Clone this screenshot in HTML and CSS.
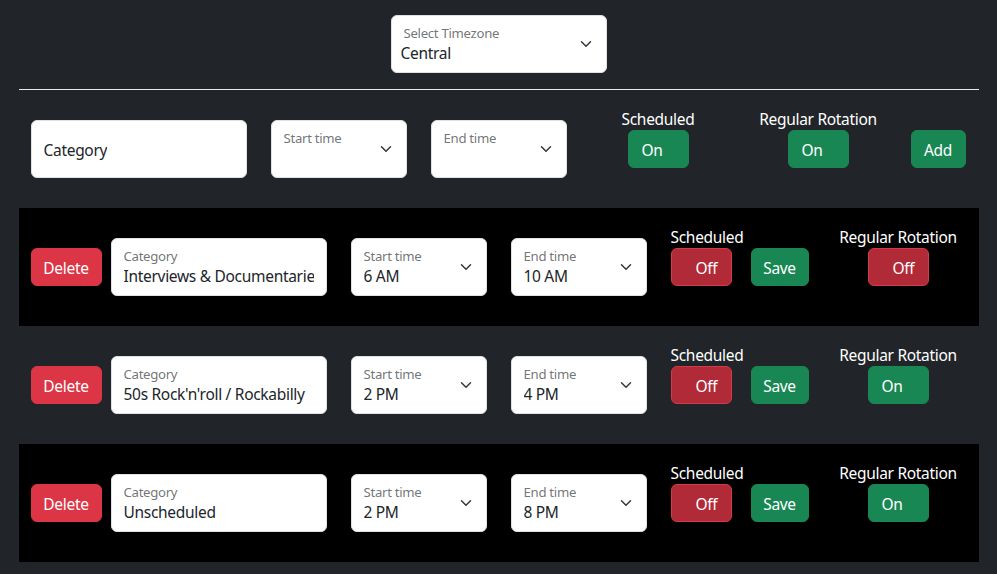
FILE: index.html
```html
<!DOCTYPE html>
<html lang="en">
<head>
<meta charset="utf-8">
<title>Schedule</title>
<link rel="stylesheet" href="styles.css">
</head>
<body>
<div class="page">
  <div class="tz-wrap">
    <div class="field select tz">
      <div class="field-text">
        <div class="field-label">Select Timezone</div>
        <div class="field-value tz-value">Central</div>
      </div>
      <svg class="chev" viewBox="0 0 16 16" width="12" height="12"><path d="M2 5l6 6 6-6" fill="none" stroke="#343a40" stroke-width="2" stroke-linecap="round" stroke-linejoin="round"/></svg>
    </div>
  </div>
  <hr class="divider">

  <div class="new-row">
    <div class="field cat plain"><div class="field-value">Category</div></div>
    <div class="field select time gap24">
      <div class="field-text">
        <div class="field-label">Start time</div>
        <div class="field-value"></div>
      </div>
      <svg class="chev" viewBox="0 0 16 16" width="12" height="12"><path d="M2 5l6 6 6-6" fill="none" stroke="#343a40" stroke-width="2" stroke-linecap="round" stroke-linejoin="round"/></svg>
    </div>
    <div class="field select time gap24">
      <div class="field-text">
        <div class="field-label">End time</div>
        <div class="field-value"></div>
      </div>
      <svg class="chev" viewBox="0 0 16 16" width="12" height="12"><path d="M2 5l6 6 6-6" fill="none" stroke="#343a40" stroke-width="2" stroke-linecap="round" stroke-linejoin="round"/></svg>
    </div>
    <div class="tcol tcol-new-sched">
      <div class="tcol-label">Scheduled</div>
      <button class="btn toggle on">On</button>
    </div>
    <div class="tcol tcol-new-rot">
      <div class="tcol-label">Regular Rotation</div>
      <button class="btn toggle on">On</button>
    </div>
    <button class="btn btn-success add">Add</button>
  </div>

  <div class="entry dark">
    <button class="btn btn-danger del">Delete</button>
    <div class="field cat gap9">
      <div class="field-text">
        <div class="field-label">Category</div>
        <div class="field-value">Interviews &amp; Documentaries</div>
      </div>
    </div>
    <div class="field select time gap24">
      <div class="field-text">
        <div class="field-label">Start time</div>
        <div class="field-value">6 AM</div>
      </div>
      <svg class="chev" viewBox="0 0 16 16" width="12" height="12"><path d="M2 5l6 6 6-6" fill="none" stroke="#343a40" stroke-width="2" stroke-linecap="round" stroke-linejoin="round"/></svg>
    </div>
    <div class="field select time gap24">
      <div class="field-text">
        <div class="field-label">End time</div>
        <div class="field-value">10 AM</div>
      </div>
      <svg class="chev" viewBox="0 0 16 16" width="12" height="12"><path d="M2 5l6 6 6-6" fill="none" stroke="#343a40" stroke-width="2" stroke-linecap="round" stroke-linejoin="round"/></svg>
    </div>
    <div class="tcol tcol-sched">
      <div class="tcol-label">Scheduled</div>
      <button class="btn toggle off">Off</button>
    </div>
    <button class="btn btn-success save">Save</button>
    <div class="tcol tcol-rot">
      <div class="tcol-label">Regular Rotation</div>
      <button class="btn toggle off">Off</button>
    </div>
  </div>

  <div class="entry">
    <button class="btn btn-danger del">Delete</button>
    <div class="field cat gap9">
      <div class="field-text">
        <div class="field-label">Category</div>
        <div class="field-value">50s Rock'n'roll / Rockabilly</div>
      </div>
    </div>
    <div class="field select time gap24">
      <div class="field-text">
        <div class="field-label">Start time</div>
        <div class="field-value">2 PM</div>
      </div>
      <svg class="chev" viewBox="0 0 16 16" width="12" height="12"><path d="M2 5l6 6 6-6" fill="none" stroke="#343a40" stroke-width="2" stroke-linecap="round" stroke-linejoin="round"/></svg>
    </div>
    <div class="field select time gap24">
      <div class="field-text">
        <div class="field-label">End time</div>
        <div class="field-value">4 PM</div>
      </div>
      <svg class="chev" viewBox="0 0 16 16" width="12" height="12"><path d="M2 5l6 6 6-6" fill="none" stroke="#343a40" stroke-width="2" stroke-linecap="round" stroke-linejoin="round"/></svg>
    </div>
    <div class="tcol tcol-sched">
      <div class="tcol-label">Scheduled</div>
      <button class="btn toggle off">Off</button>
    </div>
    <button class="btn btn-success save">Save</button>
    <div class="tcol tcol-rot">
      <div class="tcol-label">Regular Rotation</div>
      <button class="btn toggle on">On</button>
    </div>
  </div>

  <div class="entry dark">
    <button class="btn btn-danger del">Delete</button>
    <div class="field cat gap9">
      <div class="field-text">
        <div class="field-label">Category</div>
        <div class="field-value">Unscheduled</div>
      </div>
    </div>
    <div class="field select time gap24">
      <div class="field-text">
        <div class="field-label">Start time</div>
        <div class="field-value">2 PM</div>
      </div>
      <svg class="chev" viewBox="0 0 16 16" width="12" height="12"><path d="M2 5l6 6 6-6" fill="none" stroke="#343a40" stroke-width="2" stroke-linecap="round" stroke-linejoin="round"/></svg>
    </div>
    <div class="field select time gap24">
      <div class="field-text">
        <div class="field-label">End time</div>
        <div class="field-value">8 PM</div>
      </div>
      <svg class="chev" viewBox="0 0 16 16" width="12" height="12"><path d="M2 5l6 6 6-6" fill="none" stroke="#343a40" stroke-width="2" stroke-linecap="round" stroke-linejoin="round"/></svg>
    </div>
    <div class="tcol tcol-sched">
      <div class="tcol-label">Scheduled</div>
      <button class="btn toggle off">Off</button>
    </div>
    <button class="btn btn-success save">Save</button>
    <div class="tcol tcol-rot">
      <div class="tcol-label">Regular Rotation</div>
      <button class="btn toggle on">On</button>
    </div>
  </div>
</div>
</body>
</html>
```

FILE: styles.css
```css
* { box-sizing: border-box; }
html, body { margin: 0; padding: 0; }
body {
  background: #212529;
  color: #ffffff;
  font-family: "Noto Sans", "Open Sans", sans-serif;
  font-size: 15.5px;
  letter-spacing: -0.3px;
  line-height: 24px;
}
.page {
  width: 960px;
  margin: 0 auto;
}
.tz-wrap {
  display: flex;
  justify-content: center;
  padding-top: 15px;
}
.divider {
  margin: 16px 0 0;
  border: 0;
  border-top: 1px solid #e9ecef;
  height: 0;
}

.field {
  height: 58px;
  background: #ffffff;
  border: 1px solid #dee2e6;
  border-radius: 6px;
  color: #212529;
  display: flex;
  align-items: center;
  padding: 0 12px;
  flex: none;
}
.field-text {
  flex: 1;
  min-width: 0;
  align-self: stretch;
  display: flex;
  flex-direction: column;
  padding-top: 10px;
}
.field-label {
  font-size: 13.2px;
  line-height: 15px;
  color: rgba(33, 37, 41, 0.65);
  white-space: nowrap;
}
.field-value {
  font-size: 15.5px;
  line-height: 24px;
  height: 24px;
  white-space: nowrap;
  overflow: hidden;
}
.tz-value { margin-left: -3px; }
.field.plain .field-value { padding-top: 1px; }
.chev {
  flex: none;
  margin: 0 2px 0 2px;
}
.tz { width: 216px; }
.cat { width: 216px; }
.time { width: 136px; }
.gap24 { margin-left: 24px; }
.gap9 { margin-left: 9px; }

.btn {
  font-family: inherit;
  font-size: 15.5px;
  letter-spacing: -0.3px;
  line-height: 24px;
  height: 38px;
  padding: 7px 12px 5px;
  border: 1px solid transparent;
  border-radius: 6px;
  color: #ffffff;
  text-align: center;
  flex: none;
  cursor: pointer;
}
.btn-success { background: #198754; border-color: #198754; }
.btn-danger { background: #dc3545; border-color: #dc3545; }
.del { width: 71px; padding-left: 0; padding-right: 0; }
.save { width: 58px; padding-left: 0; padding-right: 0; }
.add { width: 55px; padding-left: 0; padding-right: 0; margin-left: 22.5px; }

.toggle {
  width: 61px;
  text-align: left;
  padding-right: 0;
}
.toggle.on { background: #198754; border-color: #198754; padding-left: 13px; }
.toggle.off { background: #b02a37; border-color: #d63a4a; padding-left: 24px; }

.tcol {
  display: flex;
  flex-direction: column;
  padding-bottom: 24px;
  flex: none;
}
.tcol-label {
  height: 24px;
  padding-top: 1px;
  white-space: nowrap;
}
.tcol-new-sched { width: 100px; margin-left: 41.5px; align-items: center; }
.tcol-new-rot { width: 140px; margin-left: 40px; align-items: center; }
.tcol-sched { width: 80px; margin-left: 24px; align-items: flex-start; }
.tcol-rot { width: 140px; margin-left: 19.5px; align-items: center; }

.new-row {
  display: flex;
  align-items: center;
  padding: 0 12px;
  margin: 16px 0;
}
.entry {
  display: flex;
  align-items: center;
  height: 118px;
  padding: 0 12px;
}
.entry.dark { background: #000000; }
```
